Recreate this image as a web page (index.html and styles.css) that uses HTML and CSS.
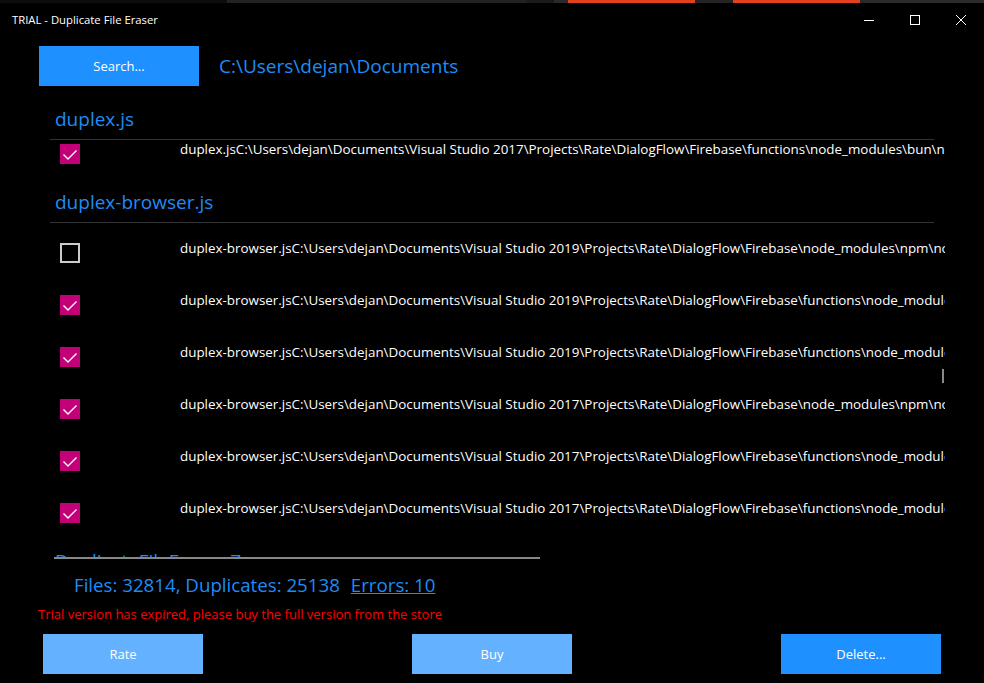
FILE: index.html
```html
<!DOCTYPE html>
<html lang="en">
<head>
    <meta charset="UTF-8">
    <title>TRIAL - Duplicate File Eraser</title>
    <link rel="stylesheet" href="styles.css">
</head>
<body>
    <div class="strip">
        <span class="seg seg-a"></span>
        <span class="seg seg-b"></span>
        <span class="seg seg-c"></span>
        <span class="seg seg-d"></span>
        <span class="seg seg-red"></span>
        <span class="seg seg-e"></span>
        <span class="seg seg-red"></span>
        <span class="seg seg-f"></span>
    </div>

    <div class="titlebar">
        <span class="title">TRIAL - Duplicate File Eraser</span>
        <div class="controls">
            <svg class="ctl" viewBox="0 0 10 10"><line x1="0" y1="5.5" x2="10" y2="5.5"/></svg>
            <svg class="ctl" viewBox="0 0 10 10"><rect x="0.5" y="0.5" width="9" height="9"/></svg>
            <svg class="ctl" viewBox="0 0 10 10"><path d="M0 0L10 10M10 0L0 10"/></svg>
        </div>
    </div>

    <div class="toolbar">
        <button class="btn btn-search">Search...</button>
        <span class="path">C:\Users\dejan\Documents</span>
    </div>

    <div class="list">
        <div class="group group-scrolled">
            <div class="group-head">duplex.js</div>
            <div class="items">
                <div class="item">
                    <span class="check on"><svg viewBox="0 0 20 20"><polyline points="3.5,10.5 8,15 16.5,6.5"/></svg></span>
                    <span class="file">duplex.jsC:\Users\dejan\Documents\Visual Studio 2017\Projects\Rate\DialogFlow\Firebase\functions\node_modules\bun\node_modules\duplex.js</span>
                </div>
            </div>
        </div>

        <div class="group">
            <div class="group-head">duplex-browser.js</div>
            <div class="items">
                <div class="item">
                    <span class="check"></span>
                    <span class="file">duplex-browser.jsC:\Users\dejan\Documents\Visual Studio 2019\Projects\Rate\DialogFlow\Firebase\node_modules\npm\node_modules\duplex-browser.js</span>
                </div>
                <div class="item">
                    <span class="check on"><svg viewBox="0 0 20 20"><polyline points="3.5,10.5 8,15 16.5,6.5"/></svg></span>
                    <span class="file">duplex-browser.jsC:\Users\dejan\Documents\Visual Studio 2019\Projects\Rate\DialogFlow\Firebase\functions\node_modules\npm\node_modules</span>
                </div>
                <div class="item">
                    <span class="check on"><svg viewBox="0 0 20 20"><polyline points="3.5,10.5 8,15 16.5,6.5"/></svg></span>
                    <span class="file">duplex-browser.jsC:\Users\dejan\Documents\Visual Studio 2019\Projects\Rate\DialogFlow\Firebase\functions\node_modules\bun\node_modules</span>
                </div>
                <div class="item">
                    <span class="check on"><svg viewBox="0 0 20 20"><polyline points="3.5,10.5 8,15 16.5,6.5"/></svg></span>
                    <span class="file">duplex-browser.jsC:\Users\dejan\Documents\Visual Studio 2017\Projects\Rate\DialogFlow\Firebase\node_modules\npm\node_modules\duplex-browser.js</span>
                </div>
                <div class="item">
                    <span class="check on"><svg viewBox="0 0 20 20"><polyline points="3.5,10.5 8,15 16.5,6.5"/></svg></span>
                    <span class="file">duplex-browser.jsC:\Users\dejan\Documents\Visual Studio 2017\Projects\Rate\DialogFlow\Firebase\functions\node_modules\npm\node_modules</span>
                </div>
                <div class="item">
                    <span class="check on"><svg viewBox="0 0 20 20"><polyline points="3.5,10.5 8,15 16.5,6.5"/></svg></span>
                    <span class="file">duplex-browser.jsC:\Users\dejan\Documents\Visual Studio 2017\Projects\Rate\DialogFlow\Firebase\functions\node_modules\bun\node_modules</span>
                </div>
            </div>
        </div>

        <div class="group">
            <div class="group-head">DuplicateFileEraser.7z</div>
        </div>

        <span class="vscroll"></span>
        <span class="hscroll"></span>
    </div>

    <div class="status">
        <span>Files: 32814, Duplicates: 25138</span>
        <a class="errors">Errors: 10</a>
    </div>
    <p class="trial">Trial version has expired, please buy the full version from the store</p>

    <div class="actions">
        <button class="btn btn-light">Rate</button>
        <button class="btn btn-light">Buy</button>
        <button class="btn">Delete...</button>
    </div>
</body>
</html>
```

FILE: styles.css
```css
body {
    margin: 0;
    background-color: #000;
    color: #fff;
    font-family: 'Open Sans', 'Noto Sans', sans-serif;
    height: 683px;
    overflow: hidden;
}

/* window behind, peeking over the top edge */
.strip {
    display: flex;
    height: 3px;
}

.seg { display: block; height: 100%; }
.seg-a { width: 227px; background: #0d0d0d; }
.seg-b { width: 299px; background: #222; }
.seg-c { width: 28px; background: #1a1a1a; }
.seg-d { width: 14px; background: #2a2a2a; }
.seg-red { width: 127px; background: #e2401f; }
.seg-e { width: 38px; background: #242424; }
.seg-f { flex: 1; background: #2b2b2b; }

.titlebar {
    height: 35px;
    display: flex;
    align-items: center;
    justify-content: space-between;
    padding-left: 12px;
}

.title {
    font-size: 11.3px;
    margin-top: -2px;
}

.controls {
    display: flex;
    gap: 36px;
    padding-right: 18px;
    margin-top: -2px;
}

.ctl {
    width: 10px;
    height: 10px;
    fill: none;
    stroke: #fff;
    stroke-width: 1;
}

.toolbar {
    display: flex;
    align-items: center;
    margin-top: 8px;
    padding-left: 39px;
}

.btn {
    background-color: #1e90ff;
    color: #fff;
    border: none;
    width: 160px;
    height: 40px;
    font-family: 'Open Sans', sans-serif;
    font-size: 13px;
    padding: 0;
}

.btn-light {
    background-color: #63b1ff;
}

.path {
    margin-left: 20px;
    font-size: 19px;
    color: #1e8cf5;
}

.list {
    position: relative;
    margin: 7px 0 0 50px;
    width: 895px;
    height: 466px;
    overflow: hidden;
}

.group-head {
    position: relative;
    z-index: 1;
    background: #000;
    margin-right: 11px;
    padding: 12px 0 6px 5px;
    height: 28px;
    line-height: 28px;
    font-size: 19px;
    color: #1e8cf5;
    border-bottom: 1px solid #333;
}

.group-scrolled .items {
    margin-top: -16px;
}

.item {
    display: flex;
    align-items: flex-start;
    height: 52px;
}

.check {
    box-sizing: border-box;
    width: 20px;
    height: 20px;
    margin: 20px 0 0 10px;
    border: 2px solid #ccc;
    flex-shrink: 0;
}

.check.on {
    background: #c20078;
    border: none;
}

.check svg {
    display: block;
    width: 20px;
    height: 20px;
    fill: none;
    stroke: #fff;
    stroke-width: 1.4;
}

.file {
    margin: 16px 0 0 100px;
    font-size: 13.4px;
    line-height: 18px;
    white-space: nowrap;
}

.vscroll,
.hscroll {
    position: absolute;
    z-index: 2;
    background: #888;
}

.vscroll {
    left: 892px;
    top: 276px;
    width: 2px;
    height: 14px;
}

.hscroll {
    left: 4px;
    bottom: 0;
    width: 486px;
    height: 2px;
}

.status {
    margin: 14px 0 0 74px;
    font-size: 18.7px;
    line-height: 24px;
    color: #1e8cf5;
    display: flex;
    gap: 11px;
}

.errors {
    text-decoration: underline;
}

.trial {
    margin: 8px 0 0 38px;
    font-size: 13px;
    line-height: 18px;
    color: #f00;
}

.actions {
    display: flex;
    justify-content: space-between;
    margin: 11px 43px 0 43px;
}
```
